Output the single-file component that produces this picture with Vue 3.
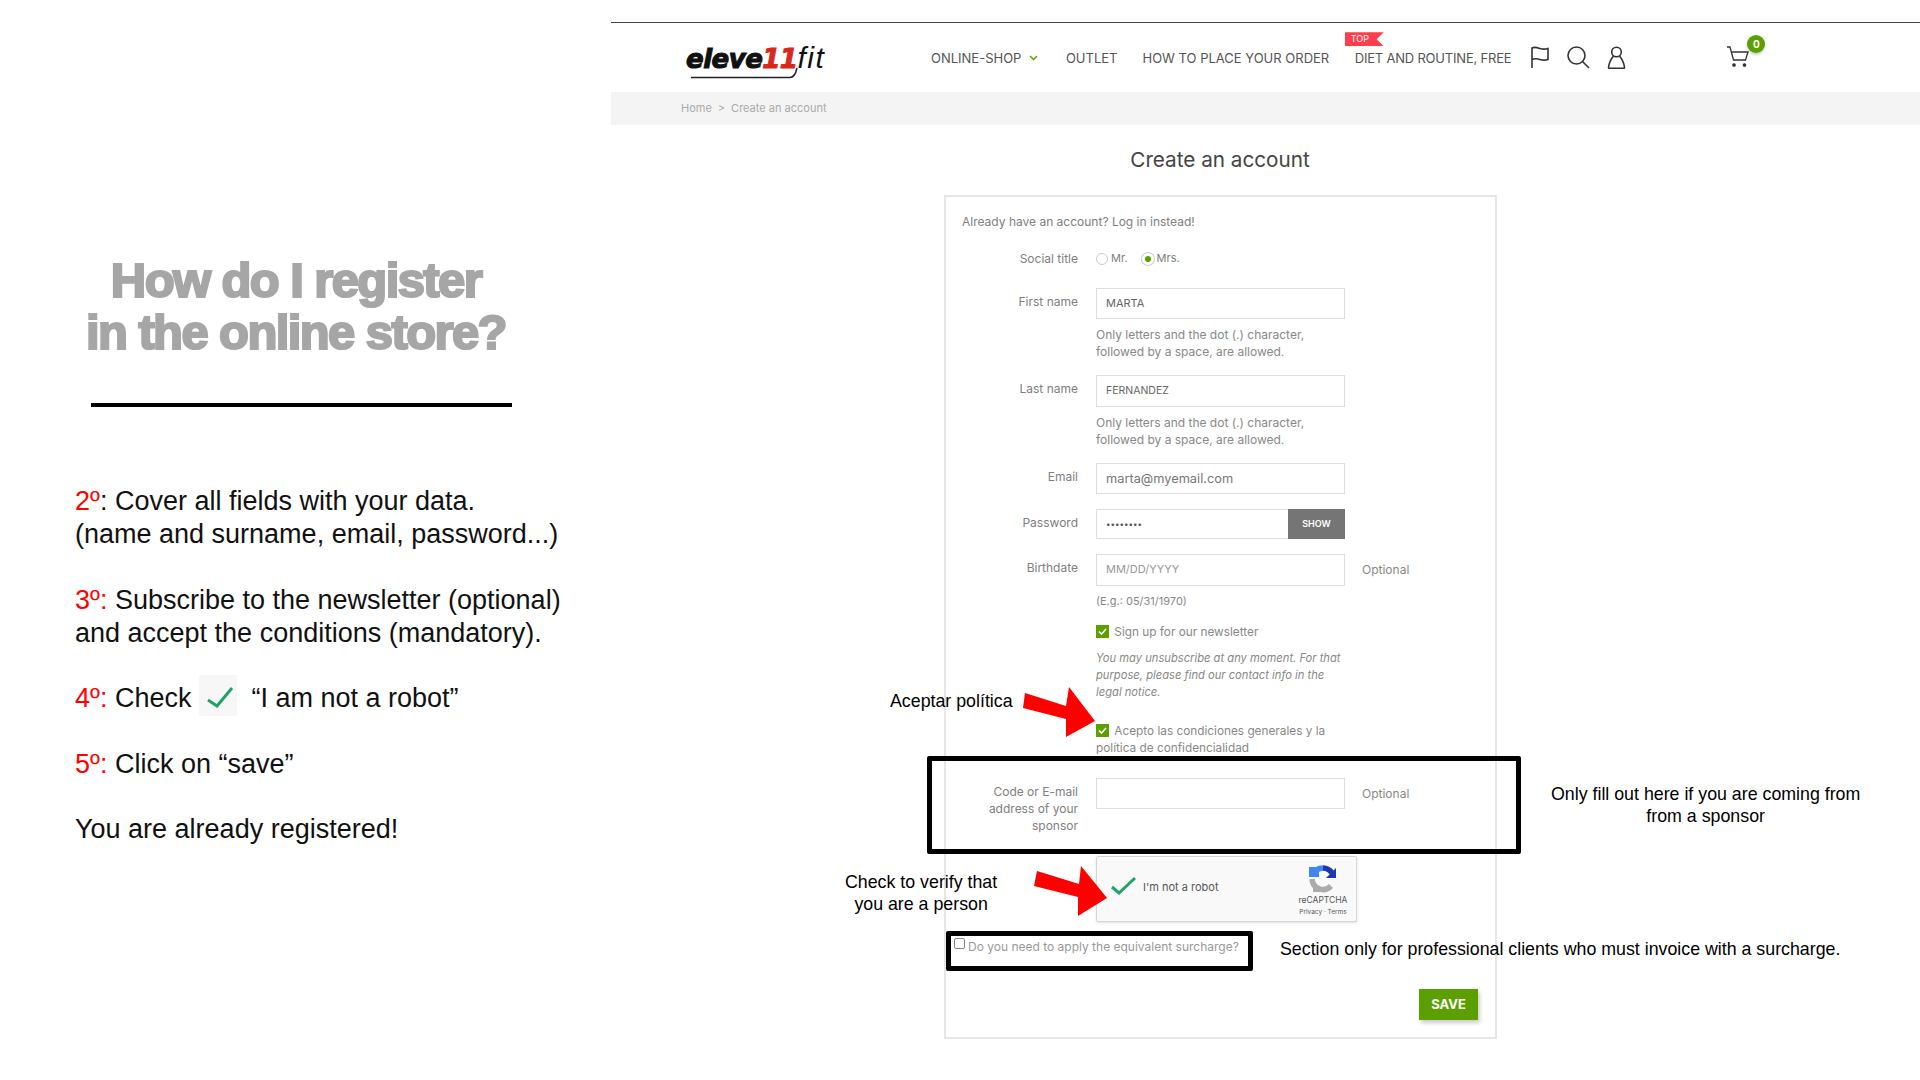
<template>
  <div class="page">
    <!-- left: instructions -->
    <aside class="guide">
      <h1 class="guide-title">How do I register<br />in the online store?</h1>
      <div class="guide-rule"></div>
      <div class="steps">
        <p><span class="red">2º</span>: Cover all fields with your data.<br />(name and surname, email, password...)</p>
        <p><span class="red">3º:</span> Subscribe to the newsletter (optional)<br />and accept the conditions (mandatory).</p>
        <p class="check-line">
          <span><span class="red">4º:</span> Check</span>
          <span class="check-tile">
            <svg width="38" height="41" viewBox="0 0 38 41"><path d="M9 25l9 6L33 13" fill="none" stroke="#1fa463" stroke-width="3" /></svg>
          </span>
          <span>“I am not a robot”</span>
        </p>
        <p><span class="red">5º:</span> Click on “save”</p>
        <p>You are already registered!</p>
      </div>
    </aside>

    <!-- right: shop page -->
    <main class="shop">
      <header class="topbar">
        <div class="logo">
          <span class="logo-main">eleve</span><span class="logo-red">11</span><span class="logo-fit">fit</span>
          <svg class="logo-swoosh" width="112" height="12" viewBox="0 0 112 12"><path d="M1 10.500H100Q105 10.500 107 1" fill="none" stroke="#222" stroke-width="1.500" /></svg>
        </div>
        <nav class="nav">
          <a class="nav-shop">ONLINE-SHOP
            <svg width="9" height="6" viewBox="0 0 9 6"><path d="M1 1l3.500 3.500L8 1" fill="none" stroke="#5ba000" stroke-width="1.500" /></svg>
          </a>
          <a class="nav-outlet">OUTLET</a>
          <a class="nav-how">HOW TO PLACE YOUR ORDER</a>
          <a class="nav-diet">DIET AND ROUTINE, FREE<span class="top-tag">TOP</span></a>
        </nav>
        <div class="tools">
          <svg width="20" height="22" viewBox="0 0 20 22" fill="none" stroke="#333" stroke-width="1.600">
            <path d="M2 22V2c3-1.500 5-.5 8 .5 3 1 5 1 8 0v11c-3 1-5 1-8 0-3-1-5-1.500-8 0" />
          </svg>
          <svg width="23" height="23" viewBox="0 0 23 23" fill="none" stroke="#333" stroke-width="1.600">
            <circle cx="9.500" cy="9.500" r="8.500" /><path d="M15.500 15.500L22 22" />
          </svg>
          <svg width="19" height="23" viewBox="0 0 19 23" fill="none" stroke="#333" stroke-width="1.600">
            <circle cx="9.500" cy="6" r="4.800" /><path d="M6.500 10C4 13 2 17 1.500 21.500c0 .5.300.800.800.800h14.400c.5 0 .8-.3.8-.8C17 17 15 13 12.500 10" />
          </svg>
        </div>
        <div class="cart">
          <svg width="24" height="21" viewBox="0 0 24 21" fill="none" stroke="#333" stroke-width="1.300">
            <path d="M1 1h3l3.500 13h12L22 6H6" />
            <circle cx="8" cy="19" r="1.200" fill="#333" /><circle cx="18.500" cy="19" r="1.200" fill="#333" />
          </svg>
          <span class="cart-count">0</span>
        </div>
      </header>

      <div class="crumbs">
        <span>Home</span><span class="crumb-sep">&gt;</span><span>Create an account</span>
      </div>

      <h2 class="page-title">Create an account</h2>

      <section class="card">
        <p class="login-hint">Already have an account? Log in instead!</p>

        <div class="row row-title">
          <label>Social title</label>
          <div class="radios">
            <span class="radio"></span><span class="radio-text">Mr.</span>
            <span class="radio on"></span><span class="radio-text">Mrs.</span>
          </div>
        </div>

        <div class="row row-first">
          <label>First name</label>
          <div class="field dark">MARTA</div>
        </div>
        <p class="help">Only letters and the dot (.) character,<br />followed by a space, are allowed.</p>

        <div class="row row-last">
          <label>Last name</label>
          <div class="field tall dark caps">FERNANDEZ</div>
        </div>
        <p class="help">Only letters and the dot (.) character,<br />followed by a space, are allowed.</p>

        <div class="row row-email">
          <label>Email</label>
          <div class="field mail">marta@myemail.com</div>
        </div>

        <div class="row row-pass">
          <label>Password</label>
          <div class="pass-group">
            <div class="field pass-field">••••••••</div>
            <button class="show-btn">SHOW</button>
          </div>
        </div>

        <div class="row row-birth">
          <label>Birthdate</label>
          <div class="field tall muted">MM/DD/YYYY</div>
          <span class="optional">Optional</span>
        </div>
        <p class="help example">(E.g.: 05/31/1970)</p>

        <div class="check-row news">
          <span class="box">
            <svg width="13" height="13" viewBox="0 0 13 13"><path d="M3 6.500l2.500 2.500L10 4" fill="none" stroke="#fff" stroke-width="1.600" /></svg>
          </span>
          Sign up for our newsletter
        </div>
        <p class="note">You may unsubscribe at any moment. For that<br />purpose, please find our contact info in the<br />legal notice.</p>

        <div class="check-row accept">
          <span class="box">
            <svg width="13" height="13" viewBox="0 0 13 13"><path d="M3 6.500l2.500 2.500L10 4" fill="none" stroke="#fff" stroke-width="1.600" /></svg>
          </span>
          Acepto las condiciones generales y la<br />política de confidencialidad
        </div>

        <div class="row row-sponsor">
          <label>Code or E-mail<br />address of your<br />sponsor</label>
          <div class="field"></div>
          <span class="optional">Optional</span>
        </div>

        <div class="captcha">
          <svg class="captcha-check" width="28" height="20" viewBox="0 0 28 20"><path d="M2 11l7 6L25 2" fill="none" stroke="#1fa463" stroke-width="3" /></svg>
          <span class="captcha-text">I'm not a robot</span>
          <div class="captcha-brand">
            <svg width="28" height="28" viewBox="0 0 28 28" fill="none">
              <path d="M14 3a11 11 0 0 1 9 5" stroke="#1c3aa9" stroke-width="5.500" />
              <path d="M27 3v10H17z" fill="#1c3aa9" />
              <path d="M14 3A11 11 0 0 0 4 10" stroke="#4285f4" stroke-width="5.500" />
              <path d="M0 2l10 0 0 10H0z" fill="#4285f4" />
              <path d="M3 14a11 11 0 0 0 19 7" stroke="#ababab" stroke-width="5.500" />
              <path d="M13 27H4v-9z" fill="#ababab" />
            </svg>
            <span class="brand-name">reCAPTCHA</span>
            <span class="brand-links">Privacy · Terms</span>
          </div>
        </div>

        <div class="surcharge"><span class="plain-box"></span>Do you need to apply the equivalent surcharge?</div>

        <button class="save-btn">SAVE</button>
      </section>
    </main>

    <!-- annotations laid over the screenshot -->
    <svg class="arrows" width="1920" height="1080" viewBox="0 0 1920 1080">
      <polygon points="1025,693 1023,708 1066,719 1066,737 1095,721 1069,687 1066,706" fill="#fe0000" />
      <polygon points="1037,871 1034,886 1078,897 1078,916 1107,898 1081,866 1079,884" fill="#fe0000" />
    </svg>
    <div class="frame frame-sponsor"></div>
    <div class="frame frame-surcharge"></div>
    <div class="remark remark-policy">Aceptar política</div>
    <div class="remark remark-person">Check to verify that<br />you are a person</div>
    <div class="remark remark-sponsor">Only fill out here if you are coming from<br />from a sponsor</div>
    <div class="remark remark-pro">Section only for professional clients who must invoice with a surcharge.</div>
  </div>
</template>

<script setup>
</script>

<style>
body {
  background: #fff;
}
</style>

<style scoped>
.page {
  position: relative;
  display: flex;
  width: 1920px;
  height: 1080px;
  overflow: hidden;
  background: #fff;
  font-family: "Liberation Sans", Arial, sans-serif;
}

/* left */
.guide {
  width: 611px;
  flex: none;
  padding: 254px 0 0 75px;
  box-sizing: border-box;
}
.guide-title {
  width: 442px;
  margin: 0;
  font-size: 49px;
  line-height: 52px;
  font-weight: 700;
  letter-spacing: -1.6px;
  text-align: center;
  white-space: nowrap;
  color: #a6a6a6;
  -webkit-text-stroke: 2.2px #a6a6a6;
}
.guide-rule {
  width: 421px;
  height: 4px;
  margin: 45px 0 0 16px;
  background: #000;
}
.steps {
  display: flex;
  flex-direction: column;
  gap: 32.5px;
  margin-top: 78px;
  font-size: 27px;
  line-height: 33px;
  color: #111;
}
.steps p {
  margin: 0;
  white-space: nowrap;
}
.red {
  color: #f00;
}
.check-line {
  display: flex;
  align-items: center;
}
.check-tile {
  display: block;
  width: 38px;
  height: 41px;
  margin: -7px 14px -1px 8px;
  background: #f7f7f7;
}

/* right */
.shop {
  flex: 1;
  margin-top: 22px;
  border-top: 1.5px solid #444;
  font-family: Inter, "Liberation Sans", sans-serif;
  color: #808080;
}
.topbar {
  display: flex;
  height: 68.5px;
  box-sizing: border-box;
}
.logo {
  position: relative;
  width: 245px;
  margin-left: 75px;
  padding-top: 19px;
  white-space: nowrap;
  line-height: 32px;
  font-style: italic;
  color: #111;
}
.logo-main,
.logo-red {
  font-family: "DejaVu Sans", sans-serif;
  font-size: 26px;
  font-weight: 700;
  letter-spacing: -0.5px;
  -webkit-text-stroke: 1.100px currentColor;
}
.logo-red {
  color: #d8281e;
}
.logo-fit {
  font-family: "Liberation Sans", sans-serif;
  font-size: 30px;
  font-weight: 400;
  letter-spacing: 1.500px;
}
.logo-swoosh {
  position: absolute;
  left: 4px;
  top: 44px;
}
.nav {
  display: flex;
  align-items: center;
  padding-top: 2px;
  font-size: 13px;
  color: #555;
  white-space: nowrap;
}
.nav a {
  position: relative;
}
.nav-shop {
  display: flex;
  align-items: center;
  gap: 8px;
  margin-right: 27.500px;
}
.nav-outlet {
  margin-right: 25px;
}
.nav-how {
  margin-right: 25.500px;
}
.nav-diet {
  letter-spacing: -0.2px;
}
.top-tag {
  position: absolute;
  left: -10px;
  top: -18px;
  width: 39px;
  height: 14px;
  padding-left: 6px;
  box-sizing: border-box;
  background: #ff3e4d;
  clip-path: polygon(0 0, 100% 0, 82% 50%, 100% 100%, 0 100%);
  color: #fff;
  font-size: 9px;
  letter-spacing: 0;
  line-height: 14px;
}
.tools {
  display: flex;
  align-items: center;
  gap: 17px;
  margin-left: 18.500px;
}
.cart {
  position: relative;
  margin: 23px 0 0 100.500px;
}
.cart-count {
  position: absolute;
  left: 21px;
  top: -11px;
  width: 18px;
  height: 18px;
  border-radius: 50%;
  background: #5ba000;
  box-shadow: 0 2px 3px rgba(0, 0, 0, 0.2);
  color: #fff;
  font-size: 10px;
  font-weight: 700;
  line-height: 18px;
  text-align: center;
}
.crumbs {
  display: flex;
  align-items: center;
  height: 33px;
  padding-left: 70px;
  background: #f4f4f4;
  color: #aaa;
  font-size: 11px;
}
.crumb-sep {
  margin: 0 6px;
}
.page-title {
  margin: 22px 0 0;
  font-size: 20.700px;
  line-height: 26px;
  font-weight: 400;
  text-align: center;
  width: 1218px;
  color: #444;
}
.card {
  width: 553px;
  height: 844px;
  margin: 22px 0 0 333px;
  box-sizing: border-box;
  border: 2px solid #e6e6e6;
  font-size: 12px;
  line-height: 17px;
}
.card p {
  margin: 0;
}
.login-hint {
  padding: 16px 0 0 16px;
}
.row {
  display: grid;
  grid-template-columns: 132px 249px auto;
  column-gap: 18px;
  align-items: start;
}
.row label {
  padding-top: 5px;
  text-align: right;
}
.row-title {
  margin-top: 19px;
}
.row-title label {
  padding-top: 1px;
}
.radios {
  display: flex;
  align-items: center;
  height: 20px;
  font-size: 11px;
}
.radio {
  width: 12px;
  height: 12px;
  margin-right: 3px;
  box-sizing: border-box;
  border: 1px solid #ccc;
  border-radius: 50%;
}
.radio.on {
  background: #5ba000;
  border: 3px solid #fff;
  box-shadow: 0 0 0 1px #ccc;
}
.radio-text {
  margin-right: 14px;
}
.row-first {
  margin-top: 19px;
}
.row-last,
.row-email,
.row-pass {
  margin-top: 15px;
}
.row-birth {
  margin-top: 15px;
}
.row-sponsor {
  margin-top: 20.500px;
}
.field {
  height: 31px;
  padding: 0 9px;
  box-sizing: border-box;
  border: 1px solid #ddd;
  font-size: 11px;
  line-height: 29px;
  color: #777;
}
.field.tall {
  height: 32px;
}
.field.dark {
  color: #666;
}
.field.caps {
  font-size: 10.500px;
}
.field.mail {
  font-size: 12.800px;
}
.field.muted {
  color: #999;
}
.pass-group {
  display: flex;
  height: 30px;
}
.pass-field {
  flex: 1;
  height: 30px;
  font-size: 8px;
  line-height: 28px;
  border-right: 0;
  color: #555;
}
.show-btn {
  width: 57px;
  padding: 0;
  border: 0;
  background: #757575;
  color: #fff;
  font-family: inherit;
  font-size: 9px;
  font-weight: 600;
}
.optional {
  padding-top: 7px;
  margin-left: -1px;
  color: #888;
}
.help {
  margin: 7px 0 0 150px !important;
  color: #888;
}
.help.example {
  margin-top: 7.500px !important;
  font-size: 11px;
}
.check-row {
  margin-left: 150px;
  color: #888;
  font-size: 11.800px;
}
.box {
  display: inline-block;
  width: 13px;
  height: 13px;
  margin-right: 2px;
  vertical-align: -2px;
  background: #5ba000;
}
.box svg {
  display: block;
}
.news {
  margin-top: 14px;
}
.note {
  margin: 9px 0 0 150px !important;
  font-size: 11.200px;
  font-style: italic;
  color: #888;
}
.accept {
  margin-top: 22px;
}
.captcha {
  display: flex;
  width: 261px;
  height: 66px;
  margin: 22px 0 0 150px;
  box-sizing: border-box;
  position: relative;
  border: 1px solid #d6d6d6;
  border-radius: 2px;
  background: #f9f9f9;
  box-shadow: 0 1px 3px rgba(0, 0, 0, 0.12);
}
.captcha-check {
  margin: 19px 0 0 13px;
}
.captcha-text {
  margin: 22px 0 0 5px;
  font-size: 11px;
  color: #555;
}
.captcha-brand {
  display: flex;
  flex-direction: column;
  align-items: center;
  margin: 0 3px 0 auto;
  width: 60px;
  padding-top: 8px;
}
.brand-name {
  margin-top: 1px;
  font-size: 8.500px;
  line-height: 12px;
  color: #555;
}
.brand-links {
  font-size: 6.500px;
  line-height: 12px;
  color: #555;
}
.surcharge {
  display: flex;
  align-items: center;
  margin: 16px 0 0 8px;
  color: #999;
  white-space: nowrap;
}
.plain-box {
  width: 11px;
  height: 11px;
  margin: -5px 3px 0 0;
  box-sizing: border-box;
  border: 1px solid #888;
  border-radius: 2px;
}
.save-btn {
  display: block;
  width: 59px;
  height: 31px;
  margin: 34px 0 0 473px;
  padding: 0;
  border: 0;
  background: #5ba000;
  box-shadow: 2px 3px 4px rgba(0, 0, 0, 0.2);
  color: #fff;
  font-family: inherit;
  font-size: 13px;
  font-weight: 700;
}

/* annotations */
.arrows {
  position: absolute;
  left: 0;
  top: 0;
  pointer-events: none;
}
.frame {
  position: absolute;
  box-sizing: border-box;
  border: 5px solid #000;
  border-radius: 2px;
}
.frame-sponsor {
  left: 927px;
  top: 756px;
  width: 594px;
  height: 98px;
}
.frame-surcharge {
  left: 946px;
  top: 931px;
  width: 307px;
  height: 40px;
}
.remark {
  position: absolute;
  font-size: 17.800px;
  line-height: 22px;
  color: #000;
  white-space: nowrap;
}
.remark-policy {
  left: 890px;
  top: 690px;
}
.remark-person {
  left: 845px;
  top: 871px;
  text-align: center;
}
.remark-sponsor {
  left: 1551px;
  top: 783px;
  text-align: center;
}
.remark-pro {
  left: 1280px;
  top: 938px;
}
</style>
